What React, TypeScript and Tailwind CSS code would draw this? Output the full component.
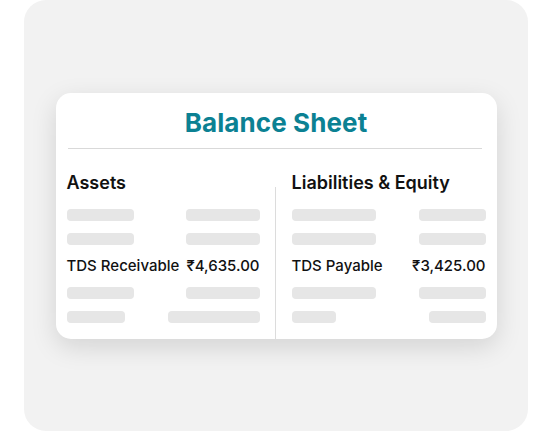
import React from "react";

const Skeleton: React.FC<{ w: number }> = ({ w }) => (
  <div className="h-[12px] rounded-[4px] bg-[#e6e6e6]" style={{ width: w }} />
);

const BarRow: React.FC<{ left: number; right: number; className?: string }> = ({
  left,
  right,
  className = "",
}) => (
  <div className={`flex items-center justify-between ${className}`}>
    <Skeleton w={left} />
    <Skeleton w={right} />
  </div>
);

const Column: React.FC<{
  title: string;
  label: string;
  amount: string;
  rows: [number, number][];
}> = ({ title, label, amount, rows }) => (
  <div className="flex flex-col">
    <h3 className="text-[18px] leading-[22px] font-semibold text-[#111111]">
      {title}
    </h3>
    <BarRow left={rows[0][0]} right={rows[0][1]} className="mt-[15px]" />
    <BarRow left={rows[1][0]} right={rows[1][1]} className="mt-[12px]" />
    <div className="mt-[11px] flex items-center justify-between text-[15px] leading-[20px] font-medium text-[#111111]">
      <span>{label}</span>
      <span>{amount}</span>
    </div>
    <BarRow left={rows[2][0]} right={rows[2][1]} className="mt-[11px]" />
    <BarRow left={rows[3][0]} right={rows[3][1]} className="mt-[12px]" />
  </div>
);

export default function App() {
  return (
    <div
      className="w-[548px] h-[432px] bg-white pl-[24px] pr-[20px]"
      style={{ fontFamily: "Inter, 'Liberation Sans', sans-serif" }}
    >
      <div className="h-[431px] rounded-[22px] bg-[#f2f2f2] flex items-center justify-center">
        <div className="w-[441px] rounded-[15px] bg-white shadow-[0_8px_26px_rgba(0,0,0,0.13)] pt-[14px] pb-[16px]">
          <h1 className="text-center text-[26px] leading-[32px] font-bold text-[#0b8193] tracking-[0.1px]">
            Balance Sheet
          </h1>
          <div className="mt-[9px] ml-[12px] mr-[15px] h-px bg-[#d9d9d9]" />
          <div className="mt-[23px] flex px-[11px]">
            <div className="w-[193px]">
              <Column
                title="Assets"
                label="TDS Receivable"
                amount="₹4,635.00"
                rows={[
                  [67, 74],
                  [67, 74],
                  [67, 74],
                  [58, 92],
                ]}
              />
            </div>
            <div className="ml-[15px] mr-[16px] mt-[15px] -mb-[16px] w-px bg-[#dcdcdc]" />
            <div className="w-[194px]">
              <Column
                title="Liabilities & Equity"
                label="TDS Payable"
                amount="₹3,425.00"
                rows={[
                  [84, 67],
                  [84, 67],
                  [84, 67],
                  [44, 57],
                ]}
              />
            </div>
          </div>
        </div>
      </div>
    </div>
  );
}
